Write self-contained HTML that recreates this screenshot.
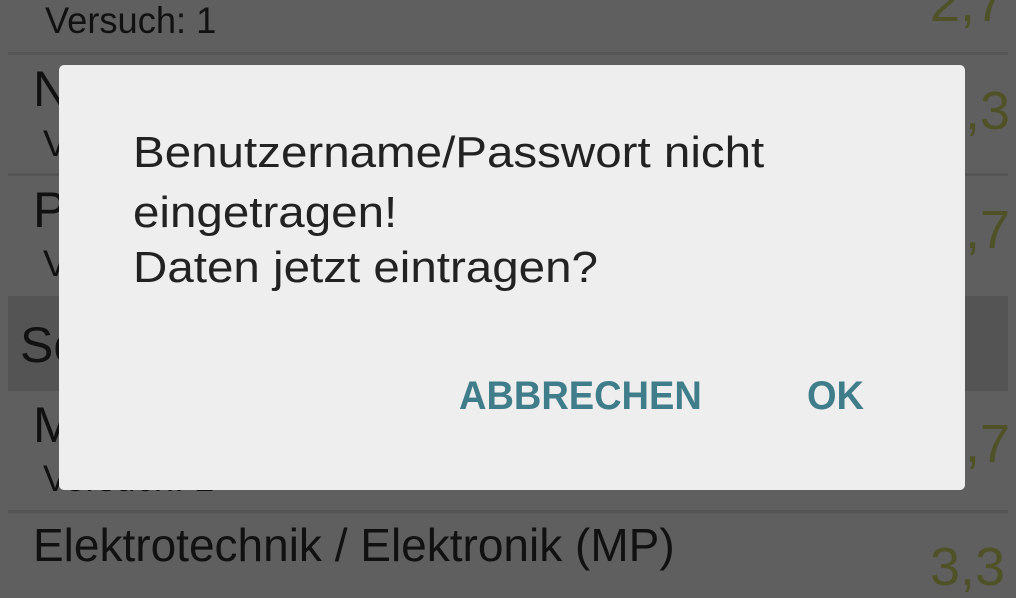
<!DOCTYPE html>
<html><head><meta charset="utf-8"><style>
html,body{margin:0;padding:0;width:1016px;height:570px;overflow:hidden;background:#5f5f5f;font-family:"Liberation Sans",sans-serif;}
.a{position:absolute;white-space:nowrap;transform-origin:0 0;}
.div{position:absolute;left:8px;right:8px;height:3px;background:#555;}
.t{color:#111;}
.g{color:#4f5226;font-size:54px;}
#dlg{position:absolute;left:59px;top:65px;width:906px;height:425px;background:#eeeeee;border-radius:5px;}
.m{color:#222;font-size:44px;transform:scaleX(1.08);}
.b{color:#3f7d8a;font-size:40px;font-weight:bold;transform:scaleX(0.95);}
</style></head><body>
<div class="a t" style="left:45px;top:0px;font-size:37px;transform:scaleX(0.98)">Versuch: 1</div>
<div class="a g" style="left:930px;top:-28px">2,7</div>
<div class="div" style="top:52px"></div>
<div class="a t" style="left:33px;top:60px;font-size:50px">N</div>
<div class="a t" style="left:43px;top:123px;font-size:37px">V</div>
<div class="a g" style="left:935px;top:80px">2,3</div>
<div class="div" style="top:173px"></div>
<div class="a t" style="left:33px;top:181px;font-size:50px">P</div>
<div class="a t" style="left:43px;top:243px;font-size:37px">V</div>
<div class="a g" style="left:935px;top:199px">1,7</div>
<div style="position:absolute;left:8px;right:8px;top:296px;height:95px;background:#545454"></div>
<div class="a t" style="left:20px;top:316px;font-size:50px">Sc</div>
<div class="a t" style="left:33px;top:396px;font-size:50px">M</div>
<div class="a t" style="left:43px;top:458px;font-size:37px;transform:scaleX(0.98)">Versuch: 1</div>
<div class="a g" style="left:935px;top:413px">1,7</div>
<div class="div" style="top:510px"></div>
<div class="a t" style="left:33px;top:518px;font-size:46px">Elektrotechnik / Elektronik (MP)</div>
<div class="a g" style="left:930px;top:536px">3,3</div>
<div id="dlg"></div>
<div class="a m" style="left:133px;top:128px">Benutzername/Passwort nicht</div>
<div class="a m" style="left:133px;top:188px">eingetragen!</div>
<div class="a m" style="left:133px;top:243px">Daten jetzt eintragen?</div>
<div class="a b" style="left:459px;top:374px">ABBRECHEN</div>
<div class="a b" style="left:807px;top:374px">OK</div>
</body></html>
